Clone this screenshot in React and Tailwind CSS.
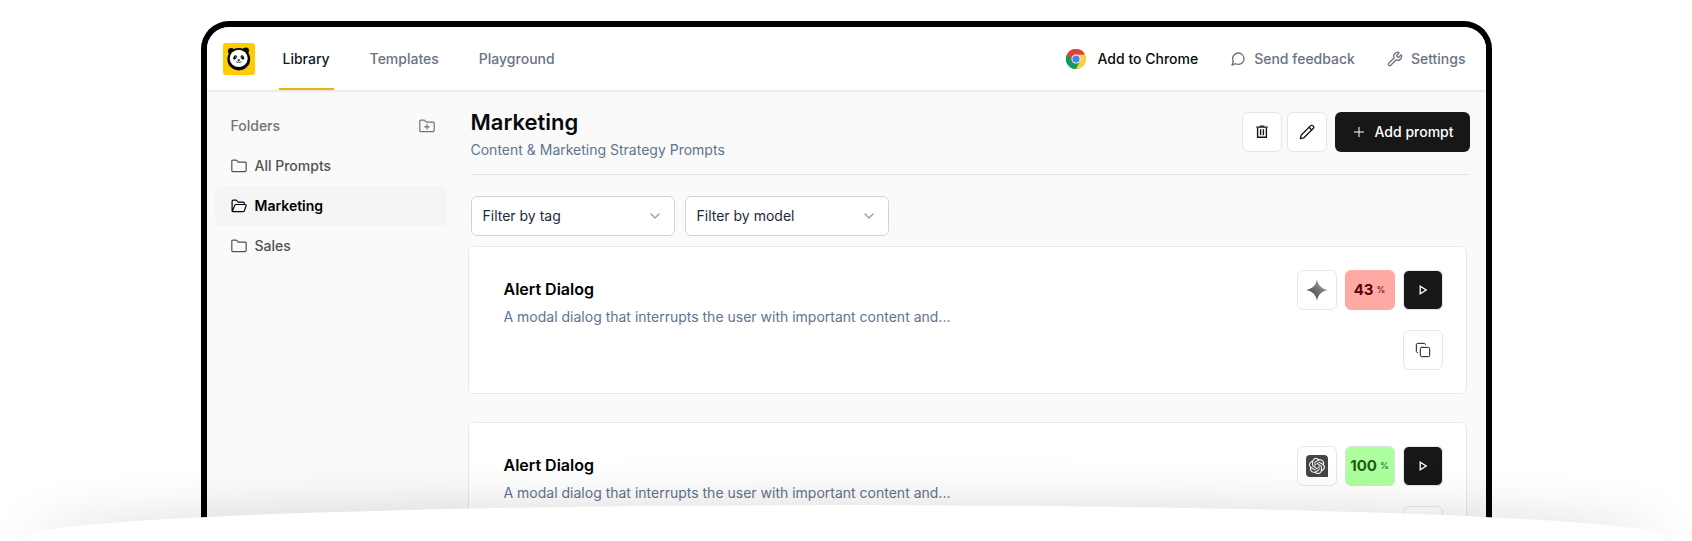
import React from "react";
import { Wrench, Pencil, Plus, ChevronDown, Copy } from "lucide-react";
import { FiMessageCircle } from "react-icons/fi";
import { SiOpenai } from "react-icons/si";

const NAV = [
  { label: "Library", active: true },
  { label: "Templates" },
  { label: "Playground" },
];

const FOLDERS = [
  { label: "All Prompts" },
  { label: "Marketing", active: true },
  { label: "Sales" },
];

const PROMPTS = [
  { id: 1, model: "gemini", score: 43, tone: "bg-[#ffa9a5] border-[#ffa9a5] text-[#5c0000]" },
  { id: 2, model: "openai", score: 100, tone: "bg-[#aeff9d] border-[#d3e3dc] text-[#1d5c12]" },
];

const iconButton =
  "flex size-10 shrink-0 items-center justify-center rounded-md border border-slate-200 bg-white text-neutral-900";

function PandaLogo() {
  return (
    <svg viewBox="0 0 32 32" className="size-8 rounded-[3px]" aria-hidden="true">
      <rect width="32" height="32" fill="#ffcc00" />
      <circle cx="8.2" cy="8.2" r="3.2" fill="#050505" />
      <circle cx="22.8" cy="7.6" r="3.2" fill="#050505" />
      <ellipse cx="15.8" cy="16.2" rx="11.4" ry="11.2" fill="#050505" />
      <ellipse cx="15.7" cy="15.4" rx="9" ry="8.7" fill="#fff" />
      <ellipse cx="12" cy="14.4" rx="1.6" ry="2.3" transform="rotate(35 12 14.4)" fill="#050505" />
      <ellipse cx="19.4" cy="14.4" rx="1.6" ry="2.3" transform="rotate(-35 19.4 14.4)" fill="#050505" />
      <circle cx="12.4" cy="13.9" r=".5" fill="#fff" />
      <circle cx="19" cy="13.9" r=".5" fill="#fff" />
      <path d="M14.5 16.8h2.4l-1.2 1.2z" fill="#050505" stroke="#050505" strokeWidth=".5" />
      <path d="M13.2 18.5c.6 1.2 1.8 1.1 2.5.3.7.8 1.9.9 2.5-.3" fill="none" stroke="#050505" strokeWidth=".9" />
    </svg>
  );
}

function ChromeLogo() {
  return (
    <svg viewBox="0 0 48 48" className="size-5" aria-hidden="true">
      <path d="M24 24 3.2 12A24 24 0 0 1 44.8 12z" fill="#db4437" />
      <path d="M24 24 44.8 12A24 24 0 0 1 24 48z" fill="#ffcd40" />
      <path d="M24 24v24A24 24 0 0 1 3.2 12z" fill="#0f9d58" />
      <path d="M24 13h21.3A24 24 0 0 1 24 48l9.5-18.5z" fill="#ffcd40" />
      <path d="M14.5 29.5 3.2 12A24 24 0 0 0 24 48l9.5-18.5z" fill="#0f9d58" />
      <path d="M24 13h21.3A24 24 0 0 0 3.2 12l11.3 17.5z" fill="#db4437" />
      <circle cx="24" cy="24" r="11" fill="#f1f1f1" />
      <circle cx="24" cy="24" r="8.6" fill="#4285f4" />
    </svg>
  );
}

function FolderIcon({ open, plus }) {
  return (
    <svg viewBox="0 0 16 16" className="size-4 shrink-0" fill="none" stroke="currentColor" strokeWidth="1.2"
      strokeLinejoin="round" strokeLinecap="round" aria-hidden="true">
      {open ? (
        <path d="M1.1 13V3.2c0-.7.4-1.1 1.1-1.1h3l2.1 2h4.9c.7 0 1.1.4 1.1 1.1v1.3M1.3 13.5l2.3-5.9c.3-.7.7-1.1 1.4-1.1h9.1c.8 0 1.200.6 1 1.3l-1.6 4.8c-.2.7-.6 1-1.3 1H2.100c-.6 0-1-.3-1-.9" />
      ) : (
        <path d="M.8 3.2c0-.6.4-1 1-1h3.5l2 2h6.9c.6 0 1 .4 1 1v7.4c0 .6-.4 1-1 1H1.8c-.6 0-1-.4-1-1z" />
      )}
      {plus && <path d="M8 6.500v4.600M5.700 8.800h4.600" />}
    </svg>
  );
}

function TrashIcon() {
  return (
    <svg viewBox="0 0 14 14" className="size-3.5" fill="none" stroke="currentColor" aria-hidden="true">
      <path d="M1.3 2.2h11.4" strokeWidth="1.3" />
      <path d="M4.7 1.2h4.6" strokeWidth="1.2" />
      <path d="M2.6 2.5v9.8h8.8V2.5" strokeWidth="1.4" />
      <path d="M5.6 4.3v6M8.4 4.3v6" strokeWidth="1.4" />
    </svg>
  );
}

function PlayIcon() {
  return (
    <svg viewBox="0 0 16 16" className="size-4" fill="none" stroke="currentColor" strokeWidth="1.3" aria-hidden="true">
      <path d="M5.2 4.2v7.6L11.2 8z" />
    </svg>
  );
}

function GeminiIcon() {
  return (
    <svg viewBox="0 0 22 22" className="size-[22px]" aria-hidden="true">
      <defs>
        <linearGradient id="spark" x1="0" y1="1" x2="1" y2="0">
          <stop offset="0.2" stopColor="#4a4a4a" />
          <stop offset="0.8" stopColor="#9a9a9a" />
        </linearGradient>
      </defs>
      <path d="M11 0c.6 5.9 5.1 10.4 11 11-5.9.6-10.4 5.1-11 11-.6-5.9-5.1-10.4-11-11 5.9-.6 10.4-5.1 11-11z" fill="url(#spark)" />
    </svg>
  );
}

function ModelIcon({ model }) {
  if (model === "gemini") return <GeminiIcon />;
  return (
    <span className="flex size-[22px] items-center justify-center rounded-[4px] rounded-br-none bg-[#454545] text-white">
      <SiOpenai size={16} />
    </span>
  );
}

function FilterSelect({ label }) {
  return (
    <div className="relative w-[204px]">
      <select aria-label={label}
        className="h-10 w-full appearance-none rounded-md border border-slate-300 bg-white pr-9 pl-[11px] text-sm text-slate-800">
        <option>{label}</option>
      </select>
      <ChevronDown size={16} strokeWidth={2}
        className="pointer-events-none absolute top-3 right-3 text-slate-400" />
    </div>
  );
}

function PromptCard({ prompt }) {
  return (
    <article className="flex justify-between rounded-md border border-slate-200 bg-white py-[23px] pr-[23px] pl-[35px]">
      <div className="pt-[7px]">
        <h2 className="text-base leading-6 font-semibold text-black">Alert Dialog</h2>
        <p className="mt-1.5 text-sm text-slate-500">
          A modal dialog that interrupts the user with important content and...
        </p>
      </div>
      <div className="flex flex-col items-end gap-5">
        <div className="flex gap-2">
          <button className={iconButton} aria-label="Model">
            <ModelIcon model={prompt.model} />
          </button>
          <div className={`flex h-10 w-[50px] items-center justify-center gap-[3px] rounded-md border ${prompt.tone}`}>
            <span className="text-[15px] font-bold">{prompt.score}</span>
            <span className="text-[9px]">%</span>
          </div>
          <button className="flex size-10 items-center justify-center rounded-md border border-slate-200 bg-neutral-900 text-white" aria-label="Run">
            <PlayIcon />
          </button>
        </div>
        <button className={iconButton} aria-label="Copy">
          <Copy size={16} strokeWidth={1.5} />
        </button>
      </div>
    </article>
  );
}

export default function App() {
  return (
    <div className="relative h-screen overflow-hidden bg-white pt-[21px] font-['Inter',sans-serif]">
      <div className="mx-auto max-w-[1291px] overflow-hidden rounded-t-[28px] border-6 border-b-0 border-black bg-neutral-50">

        {/* Top bar */}
        <header className="flex h-16 items-center justify-between border-b border-neutral-200 bg-white pr-5 pl-4 shadow-xs">
          <div className="flex h-full items-center gap-6">
            <PandaLogo />
            <nav className="flex h-full gap-8">
              {NAV.map((item) => (
                <a key={item.label} href="#"
                  className={`flex items-center border-y-2 border-t-transparent px-1 text-sm font-medium ${
                    item.active ? "border-b-[#eab308] text-gray-900" : "border-b-transparent text-gray-500"
                  }`}>
                  {item.label}
                </a>
              ))}
            </nav>
          </div>
          <div className="flex items-center gap-8 text-sm font-medium text-gray-500">
            <a href="#" className="flex items-center gap-3 text-neutral-950">
              <ChromeLogo />
              Add to Chrome
            </a>
            <a href="#" className="flex items-center gap-2">
              <FiMessageCircle size={16} strokeWidth={2} />
              Send feedback
            </a>
            <a href="#" className="flex items-center gap-2">
              <Wrench size={16} strokeWidth={2} />
              Settings
            </a>
          </div>
        </header>

        <div className="flex">
          {/* Folders */}
          <aside className="w-[248px] shrink-0 px-2 pt-[15px]">
            <div className="flex h-10 items-center justify-between pr-3 pl-4 text-neutral-500">
              <span className="text-sm font-medium">Folders</span>
              <button aria-label="New folder"><FolderIcon plus /></button>
            </div>
            {FOLDERS.map((folder) => (
              <a key={folder.label} href="#"
                className={`flex h-10 items-center gap-2 rounded-md px-4 text-sm ${
                  folder.active ? "bg-neutral-100 font-semibold text-black" : "font-medium text-neutral-600"
                }`}>
                <FolderIcon open={folder.active} />
                {folder.label}
              </a>
            ))}
          </aside>

          {/* Prompt list */}
          <main className="min-w-0 flex-1 px-4 pt-[15px]">
            <div className="flex items-start justify-between border-b border-neutral-200 pb-3.5">
              <div>
                <h1 className="text-[22px] leading-8 font-semibold text-neutral-950">Marketing</h1>
                <p className="mt-0.5 text-sm text-slate-500">Content &amp; Marketing Strategy Prompts</p>
              </div>
              <div className="flex gap-2 pt-1.5">
                <div className="flex gap-[5px]">
                  <button className={iconButton} aria-label="Delete folder"><TrashIcon /></button>
                  <button className={iconButton} aria-label="Edit folder"><Pencil size={16} strokeWidth={2} /></button>
                </div>
                <button className="flex h-10 items-center gap-2 rounded-md bg-neutral-900 px-4 text-sm font-medium text-white">
                  <Plus size={16} strokeWidth={1.5} />
                  Add prompt
                </button>
              </div>
            </div>

            <div className="mt-[21px] flex gap-2.5">
              <FilterSelect label="Filter by tag" />
              <FilterSelect label="Filter by model" />
            </div>

            <div className="mt-2.5 mr-[3px] -ml-[3px] flex flex-col gap-7">
              {PROMPTS.map((prompt) => (
                <PromptCard key={prompt.id} prompt={prompt} />
              ))}
            </div>
          </main>
        </div>
      </div>

      {/* Curved lip that covers the bottom of the frame */}
      <div className="pointer-events-none absolute inset-x-[26px] -bottom-7 h-16 rounded-[50%] bg-white shadow-[0_0_50px_rgba(0,0,0,0.15)]" />
    </div>
  );
}
